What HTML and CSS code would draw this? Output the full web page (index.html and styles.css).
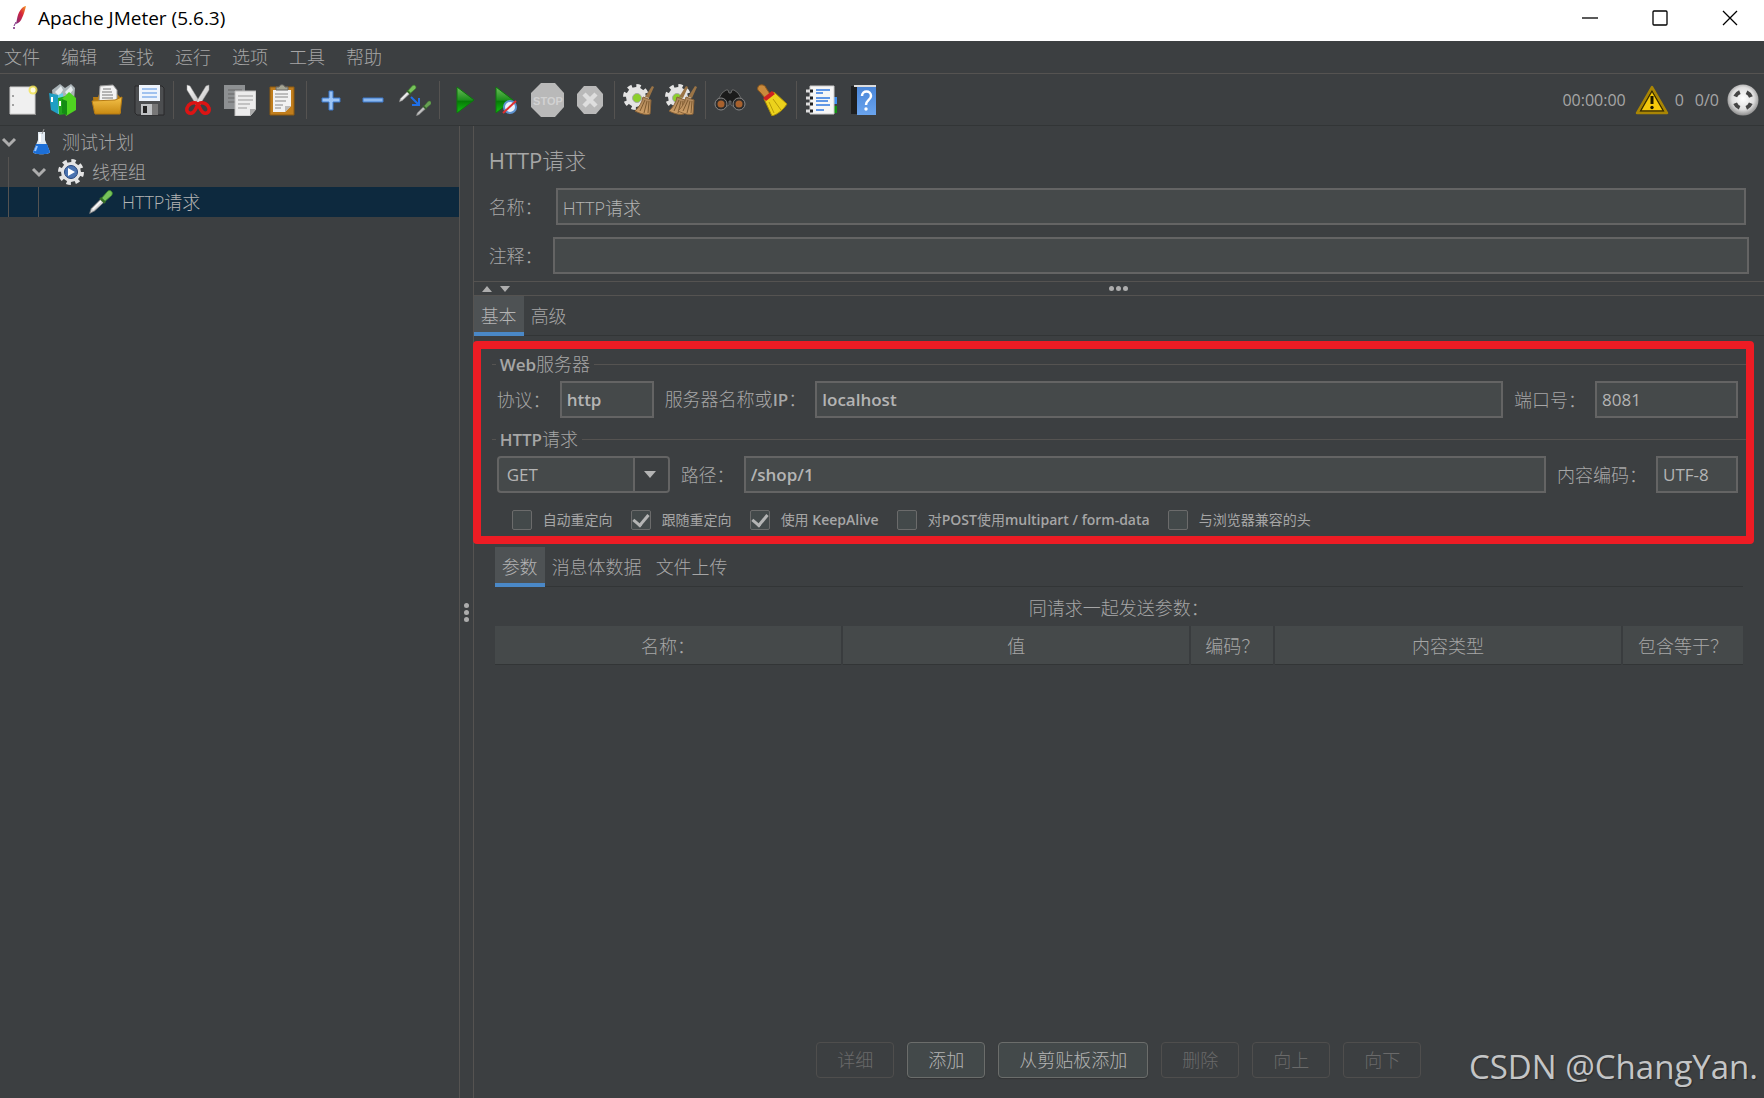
FILE: index.html
```html
<!DOCTYPE html>
<html lang="zh-CN">
<head>
<meta charset="utf-8">
<meta name="viewport" content="width=device-width, initial-scale=1">
<title>Apache JMeter (5.6.3)</title>
<link rel="stylesheet" href="styles.css">
</head>
<body>
<svg class="defs" width="0" height="0" aria-hidden="true">
  <defs>
    <linearGradient id="gGreen" x1="0" y1="0" x2="0" y2="1"><stop offset="0" stop-color="#6fbf5c"/><stop offset=".5" stop-color="#1c8f1c"/><stop offset=".55" stop-color="#067a06"/><stop offset="1" stop-color="#12c312"/></linearGradient>
    <linearGradient id="gFolder" x1="0" y1="0" x2="0" y2="1"><stop offset="0" stop-color="#f4c24a"/><stop offset="1" stop-color="#c98a12"/></linearGradient>
    <linearGradient id="gBlade" x1="0" y1="0" x2="1" y2="1"><stop offset="0" stop-color="#fff"/><stop offset="1" stop-color="#b9b9b9"/></linearGradient>
    <linearGradient id="gBlue" x1="0" y1="0" x2="0" y2="1"><stop offset="0" stop-color="#4a86d8"/><stop offset="1" stop-color="#6aa4ee"/></linearGradient>
    <linearGradient id="gStraw" x1="0" y1="0" x2="0" y2="1"><stop offset="0" stop-color="#a9835a"/><stop offset="1" stop-color="#cf9f66"/></linearGradient>
    <linearGradient id="gFeather" x1="1" y1="0" x2="0" y2="1"><stop offset="0" stop-color="#f39a24"/><stop offset=".45" stop-color="#d6243a"/><stop offset="1" stop-color="#7a2a80"/></linearGradient>
    <radialGradient id="gBall" cx=".5" cy=".45" r=".55"><stop offset="0" stop-color="#fff"/><stop offset=".65" stop-color="#dedede"/><stop offset="1" stop-color="#8d8d8d"/></radialGradient>
    <g id="gear"><circle r="10" fill="#e4e4e4"/><circle r="11" fill="none" stroke="#e4e4e4" stroke-width="4" stroke-dasharray="4.300 4.340"/></g>
    <g id="straw"><path d="M27 1l2 1-5 11-4-1z" fill="#9a7446"/><path d="M18 12l8 3-1 14c-4 1-9 0-15-3 4-4 7-8 8-14z" fill="url(#gStraw)" stroke="#8a6338"/><path d="M20 15l-5 11M22 16l-3 12M24 16l-1 12" stroke="#7d5a30" fill="none"/></g>
    <g id="pipette"><path d="M2 30l2-6L16 12l4 4L8 27z" fill="#d9d9d9" stroke="#777"/><path d="M6 25L16 15" stroke="#fff" stroke-width="1.500"/><path d="M15 11l6 6" stroke="#356b25" stroke-width="3"/><path d="M17 11l7-8c3-3 8 1 5 5l-8 7z" fill="#77c25a" stroke="#3e8a2c"/></g>
  </defs>
</svg>

<header class="titlebar">
  <svg class="feather" viewBox="0 0 16 24" aria-hidden="true"><path d="M14 0C9 1 6 7 5 13l-1 5c3-1 5-3 6-6 2-4 3-8 4-12z" fill="url(#gFeather)"/><path d="M4 16l-2 4" stroke="#7a2a80"/><circle cx="2" cy="22" r="1" fill="#7a2a80"/></svg>
  <h1 class="app-title">Apache JMeter (5.6.3)</h1>
  <div class="window-controls">
    <button class="win-btn" aria-label="最小化"><svg viewBox="0 0 16 16"><path d="M0 8h16"/></svg></button>
    <button class="win-btn" aria-label="最大化"><svg viewBox="0 0 16 16"><rect x="1" y="1" width="14" height="14" rx="1"/></svg></button>
    <button class="win-btn" aria-label="关闭"><svg viewBox="0 0 16 16"><path d="M1 1l14 14M15 1L1 15"/></svg></button>
  </div>
</header>

<nav class="menubar">
  <button>文件</button><button>编辑</button><button>查找</button><button>运行</button><button>选项</button><button>工具</button><button>帮助</button>
</nav>

<div class="toolbar" role="toolbar">
  <button aria-label="新建"><svg viewBox="0 0 32 32"><path d="M3 3h25v27H3z" fill="#f0f0f0" stroke="#cfcfcf"/><path d="M3 30.500h26" stroke="#8f8f8f"/><circle cx="6" cy="12" r="1" fill="#888"/><circle cx="6" cy="21" r="1" fill="#888"/><circle cx="26" cy="6" r="4.500" fill="#f3e34d" opacity=".8"/><circle cx="26" cy="6" r="2.500" fill="#fffbe0"/></svg></button>
  <button aria-label="模板"><svg viewBox="0 0 32 32"><path d="M3 6l8-6 5 4 6-4 4 4-1 12H4z" fill="#aab4b8"/><path d="M6 8l6-6 2 4-4 6zM16 8l6-6 2 4-5 6z" fill="#e6ecee"/><path d="M0 9l9 2v19l-7-4z" fill="#1f9fc4"/><path d="M9 11l5-2v20l-5 1z" fill="#65cfe8"/><path d="M9 14l8-2v18l-7 1z" fill="#22a51e"/><path d="M13 15l7-7 7 6v12l-10 6z" fill="#4fd321"/><path d="M13 15l5 2v14l-5-2z" fill="#148c14"/><path d="M3 13v5M11 17v5" stroke="#fff" stroke-width="2"/></svg></button>
  <button aria-label="打开"><svg viewBox="0 0 32 32"><path d="M2 13h5l1-3h18l4 4v15H3z" fill="#b67b12"/><path d="M9 2l13-1 4 5v12H8z" fill="#f3f3f3" stroke="#999"/><path d="M12 5h8M11 8h10M11 11h11M11 14h11" stroke="#777"/><path d="M1 17l23-1 7-3-2 17H4z" fill="url(#gFolder)" stroke="#b67b12"/></svg></button>
  <button aria-label="保存"><svg viewBox="0 0 32 32"><path d="M2 2h27l2 2v27H4l-2-2z" fill="#4c4e50" stroke="#28292a"/><path d="M6 1h21v16H6z" fill="#eef4fc"/><path d="M9 5h15M9 9h15M9 13h15" stroke="#86b1ea" stroke-width="1.500"/><path d="M8 20h17v11H8z" fill="#bfc1c3"/><path d="M10 22h4v7h-4z" fill="#222"/><path d="M19 20h6v11h-6z" fill="#777"/></svg></button>
  <span class="sep"></span>
  <button aria-label="剪切"><svg viewBox="0 0 32 32"><path d="M5 1l3 1 11 18-4 2L5 6z" fill="url(#gBlade)" stroke="#999" stroke-width=".5"/><path d="M27 1l-3 1-11 18 4 2L27 6z" fill="url(#gBlade)" stroke="#999" stroke-width=".5"/><path d="M14 19c-3-1-8 1-9 5s2 6 5 5 4-5 6-9zM18 19c3-1 8 1 9 5s-2 6-5 5-4-5-6-9z" fill="none" stroke="#dc1414" stroke-width="3.500"/></svg></button>
  <button aria-label="复制"><svg viewBox="0 0 32 32"><path d="M0 1h21v24H0z" fill="#8d9092"/><path d="M4 6h14M4 10h14M4 14h14M4 18h14" stroke="#666"/><path d="M11 7h21v18l-6 7H11z" fill="#ececec" stroke="#bbb"/><path d="M14 12h15M14 16h15M14 20h12M14 24h9" stroke="#999"/><path d="M26 32v-7h6z" fill="#aaa"/></svg></button>
  <button aria-label="粘贴"><svg viewBox="0 0 32 32"><path d="M4 3h24v28H4z" fill="#c07d1c" stroke="#8c5a10"/><path d="M7 6h18v16l-6 6H7z" fill="#f2f2f2"/><path d="M9 10h13M9 13h13M9 17h11M9 21h8M9 24h6" stroke="#888"/><path d="M10 5V3h3c1-3 5-3 6 0h3v3H10z" fill="#a5a593" stroke="#666"/><path d="M19 28v-6h6z" fill="#bbb"/></svg></button>
  <span class="sep"></span>
  <button aria-label="展开"><svg viewBox="0 0 32 32"><path d="M14 7h4v7h7v4h-7v8h-4v-8H7v-4h7z" fill="#9cc4f5" stroke="#3a78cc"/></svg></button>
  <button aria-label="折叠"><svg viewBox="0 0 32 32"><path d="M6 14h20v4H6z" fill="#8cb8ee" stroke="#3a78cc"/></svg></button>
  <button aria-label="切换"><svg viewBox="0 0 32 32"><use href="#pipette" transform="translate(-1 0) scale(.6)"/><use href="#pipette" transform="translate(16 16) scale(.54)" opacity=".75"/><path d="M12 13l7 7M20 14v7h-7" fill="none" stroke="#1f6fe8" stroke-width="2"/></svg></button>
  <span class="sep"></span>
  <button aria-label="启动"><svg viewBox="0 0 32 32"><path d="M9 3l17 13L9 29z" fill="url(#gGreen)" stroke="#0c780c"/></svg></button>
  <button aria-label="无停顿启动"><svg viewBox="0 0 32 32"><path d="M6 3l17 13L6 29z" fill="url(#gGreen)" stroke="#0c780c"/><circle cx="20" cy="23" r="6" fill="#e8f2fc" stroke="#5d92cf" stroke-width="2"/><path d="M13 29l13-12" stroke="#e03030" stroke-width="2"/></svg></button>
  <button disabled aria-label="停止"><svg viewBox="0 0 32 32" overflow="visible"><path d="M9-1h14l9 10v14l-9 10H9L-1 23V9z" fill="#b9b9b9"/><text x="16" y="21" class="stop-text" text-anchor="middle">STOP</text></svg></button>
  <button disabled aria-label="关闭"><svg viewBox="0 0 32 32"><path d="M10 2h12l7 8v12l-7 8H10l-7-8V10z" fill="#b9b9b9"/><path d="M10 10l12 12M22 10L10 22" stroke="#dedede" stroke-width="4.500"/></svg></button>
  <span class="sep"></span>
  <button aria-label="清除"><svg viewBox="0 0 32 32"><use href="#gear" transform="translate(13 13)"/><circle cx="14" cy="14" r="4.500" fill="#8ccf2c" stroke="#a9a9a9"/><use href="#straw" transform="translate(2 1)"/></svg></button>
  <button aria-label="清除全部"><svg viewBox="0 0 32 32"><use href="#gear" transform="translate(13 13)"/><circle cx="12" cy="14" r="4.500" fill="#8ccf2c" stroke="#a9a9a9"/><use href="#straw" transform="translate(-6 1)"/><use href="#straw" transform="translate(3 1)"/></svg></button>
  <span class="sep"></span>
  <button aria-label="查找"><svg viewBox="0 0 32 32"><path d="M8 9l4-3h2l1 3h2l1-3h2l4 3 6 10-6 6-7-4v-4h-2v4l-7 4-6-6z" fill="#1b1b1b" stroke="#777" stroke-width=".8"/><circle cx="7" cy="20" r="6" fill="#2c2c2c" stroke="#888"/><circle cx="25" cy="20" r="6" fill="#2c2c2c" stroke="#888"/><circle cx="7" cy="20" r="3.500" fill="#a8612d"/><circle cx="25" cy="20" r="3.500" fill="#a8612d"/></svg></button>
  <button aria-label="重置查找"><svg viewBox="0 0 32 32"><path d="M2 3c1-3 7-3 8 1l4 6-5 4-5-6c-2-1-3-3-2-5z" fill="#c98a3c" stroke="#8e5a1c"/><path d="M8 15l10-7 13 12c-4 6-9 10-15 12z" fill="#ecd21c" stroke="#a68b08"/><path d="M7 14l9-7 3 3-9 7z" fill="#cf2222"/><path d="M13 18l5 11M17 15l8 11" stroke="#b89c08"/></svg></button>
  <span class="sep"></span>
  <button aria-label="函数助手"><svg viewBox="0 0 32 32"><path d="M28 13h4v7h-4z" fill="#3f8ff0"/><path d="M28 22h4v7h-4z" fill="#139213"/><path d="M5 2h24v28H5z" fill="#f6f6f6" stroke="#ccc"/><path d="M1 7h6M1 14h6M1 20h6M1 27h6" stroke="#ddd" stroke-width="3"/><path d="M5 7h3M5 14h3M5 20h3M5 27h3" stroke="#222" stroke-width="3"/><path d="M11 6h14M11 9h7M11 14h14M11 17h12M11 21h14M11 26h8" stroke="#2f78e0" stroke-width="1.700"/></svg></button>
  <button aria-label="帮助"><svg viewBox="0 0 32 32"><path d="M4 2h25v28H4z" fill="#1e1f20"/><path d="M7 1h22v2H7z" fill="#ddd"/><path d="M10 3h19v28H10z" fill="url(#gBlue)"/><path d="M15 12c0-6 9-6 9 0 0 4-5 4-5 9" fill="none" stroke="#fff" stroke-width="2.500"/><circle cx="19" cy="25" r="1.700" fill="#fff"/></svg></button>
  <div class="status">
    <span class="clock">00:00:00</span>
    <svg class="warn" viewBox="0 0 34 30" aria-hidden="true"><path d="M17 2l15 26H2z" fill="#f5c90b" stroke="#a98504" stroke-width="2.500" stroke-linejoin="round"/><path d="M17 6l11.500 20h-23z" fill="none" stroke="#3a2d00" stroke-width="1.500"/><path d="M17 11v8" stroke="#1c1700" stroke-width="3"/><circle cx="17" cy="22.500" r="1.700" fill="#1c1700"/></svg>
    <span class="errors">0</span>
    <span class="threads">0/0</span>
    <svg class="ball" viewBox="0 0 32 32" aria-hidden="true"><circle cx="16" cy="16" r="15.500" fill="url(#gBall)"/><circle cx="16" cy="16" r="8.500" fill="none" stroke="#444" stroke-width="4" stroke-dasharray="6.500 6.850" stroke-dashoffset="-3.400"/></svg>
  </div>
</div>

<main class="workspace">
  <ul class="tree">
    <li class="node">
      <svg class="chevron" viewBox="0 0 18 18"><path d="M3 6l6 6 6-6"/></svg>
      <svg class="node-icon" viewBox="0 0 26 26"><path d="M10 3h7v8l5 12c0 3-17 3-17 0l5-12z" fill="#dfe8f0"/><path d="M8 15h11l3 8c0 3-17 3-17 0z" fill="#1c6fd8"/><path d="M9 17l-2 5" stroke="#9cc8ff" stroke-width="2"/><path d="M14 5l2-5" stroke="#999"/><path d="M12 5v8" stroke="#fff" stroke-width="2"/></svg>
      <span>测试计划</span>
    </li>
    <li class="node">
      <i class="guide"></i>
      <svg class="chevron" viewBox="0 0 18 18"><path d="M3 6l6 6 6-6"/></svg>
      <svg class="node-icon" viewBox="0 0 26 26"><use href="#gear" transform="translate(13 13)"/><circle cx="13" cy="13" r="6.500" fill="#4a73b0" stroke="#27467c"/><path d="M10 9l7 4-7 4z" fill="#fff"/></svg>
      <span>线程组</span>
    </li>
    <li class="node selected">
      <i class="guide"></i><i class="guide"></i>
      <span class="chevron"></span>
      <svg class="node-icon" viewBox="0 0 32 32"><use href="#pipette"/></svg>
      <span>HTTP请求</span>
    </li>
  </ul>

  <div class="divider"><i></i><i></i><i></i></div>

  <section class="editor">
    <h2 class="editor-title"><b>HTTP</b>请求</h2>
    <div class="prop name-row"><label for="name">名称：</label><input id="name" type="text" value="HTTP请求"></div>
    <div class="prop comment-row"><label for="comment">注释：</label><input id="comment" type="text"></div>

    <div class="hsplit">
      <span class="arrows"><svg viewBox="0 0 28 8"><path d="M0 7l5-6 5 6zM18 1h10l-5 6z"/></svg></span>
      <span class="dots"><i></i><i></i><i></i></span>
    </div>

    <div class="tabs" role="tablist"><button class="tab active" role="tab">基本</button><button class="tab" role="tab">高级</button></div>

    <form class="request">
      <fieldset>
        <legend><b>Web</b>服务器</legend>
        <div class="fields">
          <label for="protocol">协议：</label><input id="protocol" class="bold w-protocol" type="text" value="http">
          <label for="host">服务器名称或<b>IP</b>：</label><input id="host" class="bold grow" type="text" value="localhost">
          <label for="port">端口号：</label><input id="port" class="w-port" type="text" value="8081">
        </div>
      </fieldset>
      <fieldset>
        <legend><b>HTTP</b>请求</legend>
        <div class="fields">
          <span class="combo"><select id="method" aria-label="方法"><option>GET</option><option>POST</option></select><svg viewBox="0 0 12 7"><path d="M0 0h12L6 7z"/></svg></span>
          <label for="path">路径：</label><input id="path" class="bold grow" type="text" value="/shop/1">
          <label for="encoding">内容编码：</label><input id="encoding" class="w-encoding" type="text" value="UTF-8">
        </div>
        <div class="checks">
          <label><input type="checkbox"><span>自动重定向</span></label>
          <label><input type="checkbox" checked><span>跟随重定向</span></label>
          <label><input type="checkbox" checked><span>使用 <b>KeepAlive</b></span></label>
          <label><input type="checkbox"><span>对<b>POST</b>使用<b>multipart / form-data</b></span></label>
          <label><input type="checkbox"><span>与浏览器兼容的头</span></label>
        </div>
      </fieldset>
    </form>

    <div class="params">
      <div class="tabs" role="tablist"><button class="tab active" role="tab">参数</button><button class="tab" role="tab">消息体数据</button><button class="tab" role="tab">文件上传</button></div>
      <table>
        <caption>同请求一起发送参数：</caption>
        <colgroup><col><col><col class="c-encode"><col><col class="c-equals"></colgroup>
        <thead><tr><th>名称：</th><th>值</th><th>编码？</th><th>内容类型</th><th>包含等于？</th></tr></thead>
      </table>
    </div>

    <div class="actions">
      <button disabled>详细</button><button>添加</button><button>从剪贴板添加</button><button disabled>删除</button><button disabled>向上</button><button disabled>向下</button>
    </div>
  </section>
</main>
<div class="watermark">CSDN @ChangYan.</div>
</body>
</html>
```
FILE: styles.css
```css
:root {
  --bg: #3c3f41;
  --field: #45494a;
  --line: #555351;
  --edge: #646464;
  --shade: #323536;
  --text: #a6a6a6;
  --strong: #b4b4b4;
  --accent: #4a88c7;
  --mark: #ed1c24;
}

* { box-sizing: border-box; }

body {
  margin: 0;
  min-height: 100vh;
  display: flex;
  flex-direction: column;
  background: var(--bg);
  color: var(--text);
  font: 300 18px/24px "Open Sans", "Noto Sans CJK SC", sans-serif;
}

button, input, select { font: inherit; color: inherit; }
button { background: none; border: 0; padding: 0; }
svg { display: block; }
.defs { position: absolute; }

/* Title bar */
.titlebar {
  display: flex;
  align-items: center;
  height: 41px;
  padding: 0 8px 6px 12px;
  background: #fff;
  color: #000;
}
.feather { width: 16px; height: 24px; }
.app-title { margin: 0 0 0 10px; font: 400 19px/24px "Open Sans", sans-serif; }
.window-controls { display: flex; gap: 38px; margin-left: auto; padding-right: 10px; }
.win-btn { width: 32px; height: 24px; display: flex; align-items: center; justify-content: center; }
.win-btn svg { width: 16px; height: 16px; fill: none; stroke: #000; stroke-width: 1.3; }

/* Menu bar */
.menubar {
  display: flex;
  gap: 21px;
  height: 33px;
  padding: 0 4px;
  border-bottom: 1px solid var(--line);
}

/* Tool bar */
.toolbar {
  display: flex;
  align-items: center;
  height: 52px;
  padding: 0 5px 0 2px;
  border-bottom: 1px solid var(--shade);
}
.toolbar button { width: 42px; height: 42px; display: flex; align-items: center; justify-content: center; }
.toolbar button svg { width: 32px; height: 32px; }
.sep { width: 1px; height: 38px; margin: 0 3px; background: var(--line); }
.stop-text { font: 700 11px "Liberation Sans", sans-serif; fill: #d2d2d2; }
.status { display: flex; align-items: center; margin-left: auto; font-size: 16px; font-weight: 400; }
.warn { width: 34px; height: 30px; margin: 0 6px 0 9px; }
.threads { margin: 0 8px 0 11px; }
.ball { width: 32px; height: 32px; }

/* Workspace */
.workspace { flex: 1; display: grid; grid-template-columns: 26% 15px 1fr; }
.tree { margin: 0; padding: 1px 0 0; list-style: none; }
.node { display: flex; align-items: center; height: 30px; }
.node.selected { background: #0d293e; color: var(--strong); }
.guide { width: 22px; height: 30px; margin-left: 8px; border-left: 1px solid var(--line); }
.chevron { width: 18px; height: 18px; margin-right: 10px; fill: none; stroke: #adadad; stroke-width: 3; }
.node-icon { width: 26px; height: 26px; margin-right: 8px; }

.divider {
  display: flex;
  flex-direction: column;
  align-items: center;
  justify-content: center;
  gap: 2px;
  border: solid var(--line);
  border-width: 0 1px;
}
.divider i, .dots i { width: 5px; height: 5px; border-radius: 50%; background: #adadad; }

.editor { display: flex; flex-direction: column; min-width: 0; }
.editor-title { margin: 18px 15px 12px; font-size: 22px; line-height: 32px; font-weight: 300; }
.editor-title b { font-weight: 400; }

input[type="text"], .combo {
  height: 37px;
  background: var(--field);
  border: 2px solid var(--edge);
  color: var(--strong);
  min-width: 0;
}
input[type="text"] { padding: 0 5px; border-radius: 0; font-size: 17px; font-weight: 400; }
input[type="text"].bold { font-weight: 600; }
input#name { font-size: 18px; font-weight: 300; }

.prop { display: flex; align-items: center; padding-left: 15px; }
.prop input { flex: 1; }
.name-row { padding-right: 18px; margin-bottom: 12px; }
.name-row label { width: 67px; }
.comment-row { padding-right: 15px; }
.comment-row label { width: 64px; }

.hsplit {
  display: grid;
  grid-template-columns: 1fr auto 1fr;
  align-items: center;
  height: 15px;
  margin-top: 7px;
  border: solid var(--line);
  border-width: 1px 0;
}
.arrows svg { width: 28px; height: 8px; margin-left: 8px; fill: #adadad; }
.dots { display: flex; gap: 2px; }

.tabs { display: flex; height: 40px; border-bottom: 1px solid var(--shade); }
.tab { padding: 3px 7px 0; height: 40px; border-bottom: 4px solid transparent; }
.tab.active { background: #4e5254; border-bottom-color: var(--accent); color: var(--strong); }

/* Highlighted request form */
.request {
  margin: 5px 10px 0 -1px;
  padding: 3px 0 6px;
  border: 8px solid var(--mark);
  border-radius: 4px;
}
fieldset { margin: 0 0 0 11px; padding: 0; border: 0 solid var(--line); border-top-width: 1px; min-width: 0; }
fieldset + fieldset { margin-top: 9px; }
legend { height: 24px; margin-left: 4px; padding: 0 4px; }
legend b, .fields b { font-weight: 600; font-size: 17px; }
.fields { display: flex; align-items: center; padding: 5px 8px 0 5px; }
.fields label { margin: 0 9px 0 11px; white-space: nowrap; }
.fields label:first-child { margin-left: 0; }
.grow { flex: 1; }
.w-protocol { width: 94px; }
.w-port { width: 143px; }
.w-encoding { width: 82px; }

.combo { display: grid; grid-template-columns: 1fr 35px; align-items: center; justify-items: center; width: 173px; border-radius: 4px; overflow: hidden; }
.combo select {
  grid-area: 1 / 1 / 2 / 3;
  width: 100%;
  height: 33px;
  padding: 0 8px;
  appearance: none;
  border: 0;
  background: linear-gradient(90deg, transparent calc(100% - 35px), var(--edge) 0, var(--edge) calc(100% - 33px), var(--bg) 0);
  font-size: 17px;
  font-weight: 400;
}
.combo svg { grid-area: 1 / 2; width: 12px; height: 7px; fill: var(--strong); pointer-events: none; }

.checks { display: flex; gap: 18px; margin-top: 17px; padding-left: 20px; font-size: 14px; line-height: 20px; font-weight: 400; }
.checks label { display: flex; align-items: center; gap: 11px; white-space: nowrap; }
.checks b { font-weight: 600; }
.checks input {
  appearance: none;
  width: 20px;
  height: 20px;
  margin: 0;
  display: grid;
  place-items: center;
  background: #43494a;
  border: 1px solid #6b6b6b;
  border-radius: 2px;
}
.checks input:checked::after {
  content: "";
  width: 7px;
  height: 12px;
  border: solid #b4b4b4;
  border-width: 0 3px 3px 0;
  rotate: 40deg;
  margin-bottom: 3px;
}

/* Parameters */
.params { margin: 3px 21px 0; }
table { width: 100%; table-layout: fixed; border-collapse: collapse; }
caption { height: 39px; padding: 9px 0 6px; }
th { height: 38px; padding: 2px 0 0; background: var(--field); border-right: 2px solid #393c3e; border-bottom: 1px solid var(--shade); font-weight: 300; }
th:last-child { border-right: 0; }
.c-encode { width: 84px; }
.c-equals { width: 121px; }

.actions { display: flex; justify-content: center; gap: 13px; margin-top: auto; padding: 0 0 20px; }
.actions button {
  height: 36px;
  padding: 0 20px;
  border: 1px solid #6b6d6b;
  border-radius: 4px;
  background: #43494a;
  color: var(--strong);
  box-shadow: 0 1px 1px #333537;
}
.actions button:disabled { background: none; border-color: #4f4e4d; color: #6a6a6a; box-shadow: none; }

.watermark {
  position: absolute;
  right: 6px;
  bottom: 9px;
  font: 400 33px/44px "Open Sans", sans-serif;
  color: #c4c5c6;
  text-shadow: 1px 1px 1px #2a2c2e;
}
```
